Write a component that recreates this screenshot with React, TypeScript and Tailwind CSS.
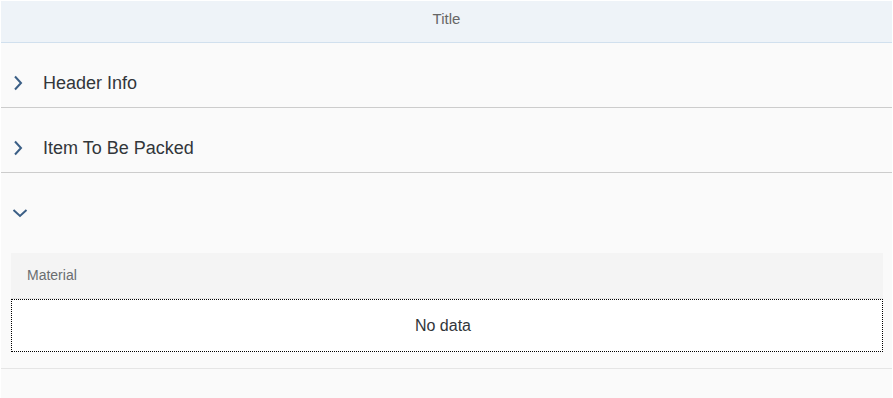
import React from 'react';

const ChevronRight = () => (
    <svg width="10" height="16" viewBox="0 0 10 16" className="shrink-0">
        <path d="M2 1.5 L8 8 L2 14.5" fill="none" stroke="#3b5f86" strokeWidth="2" />
    </svg>
);

const ChevronDown = () => (
    <svg width="16" height="10" viewBox="0 0 16 10" className="shrink-0">
        <path d="M1.5 2 L8 8 L14.5 2" fill="none" stroke="#3b5f86" strokeWidth="2" />
    </svg>
);

const PanelHeader: React.FC<{ open?: boolean; label?: string }> = ({ open, label }) => (
    <div className="h-12 flex items-center">
        {open ? (
            <div className="w-[42px] pl-[11px] flex items-center"><ChevronDown /></div>
        ) : (
            <div className="w-[42px] pl-[12px] flex items-center"><ChevronRight /></div>
        )}
        {label && <span className="text-[18px] text-[#32363a]">{label}</span>}
    </div>
);

export default function App() {
    return (
        <div className="w-[893px] h-[398px] bg-white pt-px px-px overflow-hidden font-['Liberation_Sans',Arial,sans-serif]">
            <div className="h-full bg-[#fafafa] flex flex-col">
                {/* Title bar */}
                <div className="h-[42px] shrink-0 bg-[#eef3f8] border-b border-[#d1e0ee] flex items-center justify-center">
                    <span className="text-[15px] text-[#666666] -mt-[5px]">Title</span>
                </div>

                <div className="pt-4 border-b border-[#cccccc]">
                    <PanelHeader label="Header Info" />
                </div>

                <div className="pt-4 border-b border-[#cccccc]">
                    <PanelHeader label="Item To Be Packed" />
                </div>

                <div className="pt-4 border-b border-[#e5e5e5]">
                    <PanelHeader open />
                    <div className="pt-4 pb-4 pl-[10px] pr-[9px]">
                        <div className="h-[46px] bg-[#f4f4f4] flex items-center pl-4 border-b border-[#e5e5e5]">
                            <span className="text-[14px] text-[#6a6d70]">Material</span>
                        </div>
                        <div className="h-[53px] bg-white border border-dotted border-black flex items-center justify-center pr-2">
                            <span className="text-[16px] text-[#32363a]">No data</span>
                        </div>
                    </div>
                </div>
            </div>
        </div>
    );
}
